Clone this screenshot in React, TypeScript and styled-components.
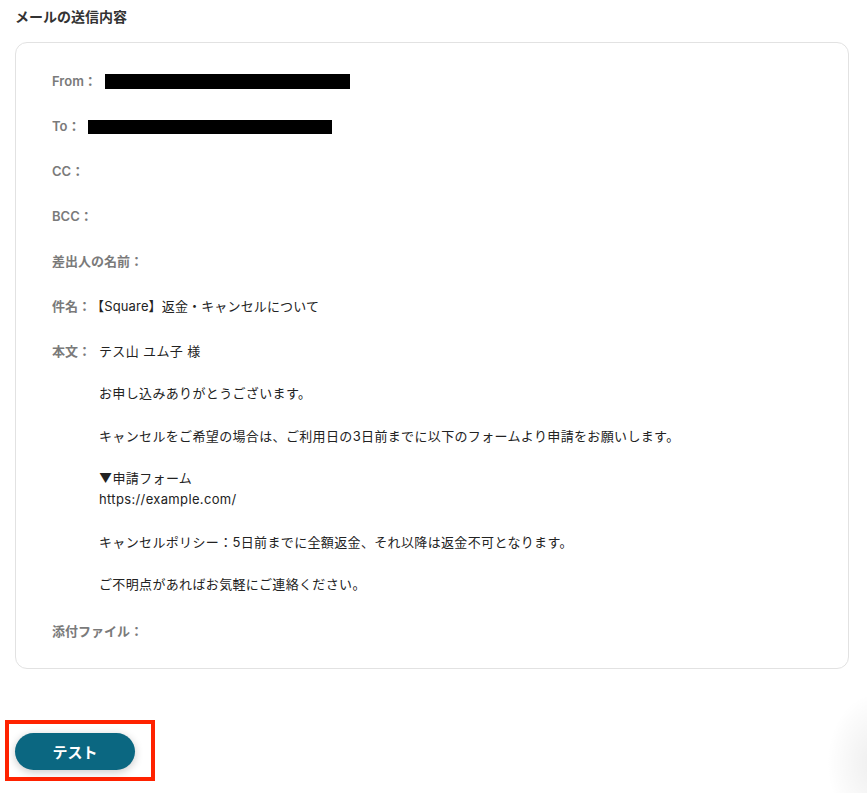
import React from "react";
import styled, { createGlobalStyle } from "styled-components";

const fields: { label: string; value?: React.ReactNode }[] = [
    { label: "From：", value: "redact-from" },
    { label: "To：", value: "redact-to" },
    { label: "CC：" },
    { label: "BCC：" },
    { label: "差出人の名前：" },
    { label: "件名：", value: "【Square】返金・キャンセルについて" },
];

const bodyText = `テス山 ユム子 様

お申し込みありがとうございます。

キャンセルをご希望の場合は、ご利用日の3日前までに以下のフォームより申請をお願いします。

▼申請フォーム
https://example.com/

キャンセルポリシー：5日前までに全額返金、それ以降は返金不可となります。

ご不明点があればお気軽にご連絡ください。`;

function App() {
    return (
        <Page>
            <GlobalStyle />
            <Title>メールの送信内容</Title>
            <Card>
                {fields.map((f) => (
                    <Row key={f.label}>
                        <Label>{f.label}</Label>
                        {f.value === "redact-from" && <Redacted width={245} height={15} />}
                        {f.value === "redact-to" && <Redacted width={244} height={14} />}
                        {typeof f.value === "string" && !f.value.startsWith("redact") && (
                            <Value>{f.value}</Value>
                        )}
                    </Row>
                ))}
                <Row>
                    <Label>本文：</Label>
                    <Body>{bodyText}</Body>
                </Row>
                <Row $extraTop={2}>
                    <Label>添付ファイル：</Label>
                </Row>
            </Card>
            <Footer>
                <Highlight>
                    <TestButton type="button">テスト</TestButton>
                </Highlight>
            </Footer>
            <CornerShadow />
        </Page>
    );
}

const GlobalStyle = createGlobalStyle`
  html, body {
    margin: 0;
    padding: 0;
    background: #ffffff;
  }
  body {
    font-family: Inter, "Noto Sans CJK JP", sans-serif;
    color: #222222;
    overflow: hidden;
  }
`;

const Page = styled.div`
    position: relative;
    width: 867px;
    height: 793px;
    padding: 6px 18px 0 15px;
    box-sizing: border-box;
    overflow: hidden;
`;

const Title = styled.h2`
    margin: 0;
    font-family: "Noto Sans CJK JP", sans-serif;
    font-size: 14px;
    font-weight: 700;
    line-height: 20px;
    color: #333333;
`;

const Card = styled.div`
    margin-top: 16px;
    border: 1px solid #e2e2e2;
    border-radius: 12px;
    padding: 28px 36px 26px;
    display: flex;
    flex-direction: column;
    gap: 24px;
`;

const Row = styled.div<{ $extraTop?: number }>`
    display: flex;
    align-items: flex-start;
    gap: 6px;
    min-height: 21px;
    margin-top: ${(p) => p.$extraTop || 0}px;
    font-size: 13px;
    line-height: 21px;
`;

const Label = styled.span`
    flex: none;
    font-weight: 600;
    color: #7a7a7a;
`;

const Value = styled.span`
    color: #222222;
    margin-left: -6px;
    letter-spacing: 0.15px;
`;

const Redacted = styled.span<{ width: number; height: number }>`
    display: inline-block;
    margin-left: 2px;
    margin-top: ${(p) => (21 - p.height) / 2}px;
    width: ${(p) => p.width}px;
    height: ${(p) => p.height}px;
    background: #000000;
`;

const Body = styled.div`
    white-space: pre-wrap;
    color: #222222;
    padding-left: 2px;
    line-height: 21.2px;
    letter-spacing: 0.35px;
`;

const Footer = styled.div`
    margin-top: 51px;
    margin-left: -10px;
`;

const Highlight = styled.div`
    display: inline-block;
    border: 4px solid #ff2200;
    padding: 9px 16px 7px 6px;
`;

const TestButton = styled.button`
    display: block;
    width: 120px;
    height: 37px;
    border: none;
    border-radius: 19px;
    background: #0b6781;
    color: #ffffff;
    font-family: "Noto Sans CJK JP", sans-serif;
    font-size: 15px;
    font-weight: 700;
    box-shadow: 0 2px 8px rgba(0, 0, 0, 0.22);
    cursor: pointer;
`;

const CornerShadow = styled.div`
    position: absolute;
    right: -60px;
    bottom: -40px;
    width: 100px;
    height: 140px;
    border-radius: 50%;
    background: radial-gradient(closest-side, rgba(0, 0, 0, 0.07), rgba(0, 0, 0, 0));
    pointer-events: none;
`;

export default App;
